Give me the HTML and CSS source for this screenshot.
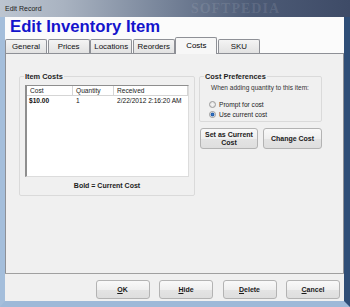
FILE: index.html
```html
<!DOCTYPE html>
<html>
<head>
<meta charset="utf-8">
<title>Edit Record</title>
<link rel="stylesheet" href="styles.css">
</head>
<body>
<div class="window">
  <div class="titlebar">
    <span class="caption">Edit Record</span>
    <span class="watermark">SOFTPEDIA</span>
  </div>
  <div class="frame">
    <div class="client">
      <div class="header">
        <h1 class="app-title">Edit Inventory Item</h1>
        <div class="tabs">
          <div class="tab">General</div>
          <div class="tab">Prices</div>
          <div class="tab">Locations</div>
          <div class="tab">Reorders</div>
          <div class="tab active">Costs</div>
          <div class="tab">SKU</div>
        </div>
      </div>
      <div class="panel">
        <fieldset class="group costs-group">
          <legend>Item Costs</legend>
          <div class="listview">
            <div class="lv-row lv-head">
              <span class="cell">Cost</span>
              <span class="cell">Quantity</span>
              <span class="cell">Received</span>
            </div>
            <div class="lv-row">
              <span class="cell bold">$10.00</span>
              <span class="cell">1</span>
              <span class="cell">2/22/2012 2:16:20 AM</span>
            </div>
          </div>
          <div class="note">Bold = Current Cost</div>
        </fieldset>
        <div class="right-col">
          <fieldset class="group pref-group">
            <legend>Cost Preferences</legend>
            <div class="hint">When adding quantity to this item:</div>
            <label class="radio first"><span class="dot"></span>Prompt for cost</label>
            <label class="radio"><span class="dot on"></span>Use current cost</label>
          </fieldset>
          <div class="btn-row">
            <button class="btn set-btn">Set as Current<br>Cost</button>
            <button class="btn change-btn">Change Cost</button>
          </div>
        </div>
      </div>
      <div class="footer">
        <button class="btn foot-btn"><u>O</u>K</button>
        <button class="btn foot-btn"><u>H</u>ide</button>
        <button class="btn foot-btn"><u>D</u>elete</button>
        <button class="btn foot-btn"><u>C</u>ancel</button>
      </div>
    </div>
  </div>
</div>
</body>
</html>
```
FILE: styles.css
```css
html, body {
  margin: 0;
  padding: 0;
}
body {
  width: 350px;
  height: 307px;
  overflow: hidden;
  font-family: "Liberation Sans", Arial, sans-serif;
  background: #3c4965;
}
.window {
  display: flex;
  flex-direction: column;
  height: 307px;
}
.titlebar {
  height: 17px;
  flex: none;
  display: flex;
  align-items: center;
  justify-content: space-between;
  padding-left: 5px;
  background: linear-gradient(to right, #bcc5d0 0%, #a9b3c1 18%, #7a879c 45%, #4d5b76 72%, #3e4b67 100%);
  overflow: hidden;
}
.caption {
  font-size: 7px;
  color: #1c1c1c;
}
.watermark {
  font-family: "Liberation Serif", serif;
  font-size: 14px;
  font-weight: bold;
  letter-spacing: 1px;
  color: rgba(255, 255, 255, 0.1);
  margin-right: 70px;
}
.frame {
  flex: 1;
  display: flex;
  border-left: 5px solid #a4bedb;
  border-right: 6px solid #2f4e77;
  border-bottom: 6px solid #9db9d8;
}
.client {
  flex: 1;
  display: flex;
  flex-direction: column;
  background: #f0f0f0;
}
.header {
  height: 36px;
  flex: none;
  background: #fbfbfb;
}
.app-title {
  margin: 0;
  height: 20px;
  line-height: 20px;
  padding-left: 5px;
  font-size: 16.7px;
  font-weight: bold;
  color: #1414cc;
}
.tabs {
  height: 16px;
  display: flex;
  align-items: flex-end;
  gap: 0.6px;
}
.tab {
  width: 42px;
  height: 14px;
  box-sizing: border-box;
  border: 1px solid #8e9096;
  border-bottom: none;
  border-radius: 2px 2px 0 0;
  background: linear-gradient(#f4f4f4, #e2e2e2);
  font-size: 7.9px;
  line-height: 13px;
  text-align: center;
  color: #111;
}
.tab.active {
  height: 17px;
  margin-bottom: -1px;
  line-height: 15px;
  background: #f7f7f7;
  position: relative;
  z-index: 1;
  color: #000;
}
.panel {
  height: 220px;
  flex: none;
  box-sizing: border-box;
  border: 1px solid #8e9096;
  border-bottom: none;
  padding: 18px 0 0 13px;
  display: flex;
  align-items: flex-start;
  gap: 4px;
}
.group {
  margin: 0;
  padding: 4px 5px 4px 5px;
  border: 1px solid #dadada;
  border-radius: 2px;
  min-width: 0;
  box-sizing: border-box;
}
.group legend {
  padding: 0 1px;
  margin-left: -1px;
  font-size: 7.4px;
  font-weight: bold;
  line-height: 9px;
  color: #1e1e1e;
}
.costs-group {
  width: 176px;
}
.listview {
  height: 92px;
  box-sizing: border-box;
  background: #fff;
  border-style: solid;
  border-width: 1px 1px 1px 2px;
  border-color: #8e8e8e #dcdcdc #dcdcdc #8e8e8e;
  font-size: 6.6px;
  color: #111;
  overflow: hidden;
}
.lv-row {
  display: grid;
  grid-template-columns: 46px 41px 1fr;
  height: 8px;
  line-height: 8px;
  white-space: nowrap;
}
.lv-head {
  height: 10px;
  line-height: 10px;
  box-sizing: border-box;
  border-bottom: 1px solid #d5d5d5;
  margin-bottom: 1px;
}
.lv-head .cell {
  border-right: 1px solid #d5d5d5;
  color: #222;
}
.cell {
  padding-left: 3px;
}
.cell.bold {
  font-weight: bold;
  padding-left: 2px;
}
.note {
  margin-top: 4px;
  text-align: center;
  font-size: 7px;
  font-weight: bold;
  line-height: 10px;
  color: #222;
}
.right-col {
  display: flex;
  flex-direction: column;
}
.pref-group {
  width: 123px;
  padding: 3px 5px 2px 5px;
}
.hint {
  margin-left: 6px;
  font-size: 6.5px;
  line-height: 8px;
  color: #333;
  white-space: nowrap;
}
.radio {
  display: flex;
  align-items: center;
  gap: 3px;
  height: 10px;
  margin-left: 4px;
  font-size: 6.6px;
  color: #222;
}
.radio.first {
  margin-top: 7px;
}
.dot {
  width: 7px;
  height: 7px;
  box-sizing: border-box;
  border-radius: 50%;
  border: 1px solid #9a9a9a;
  background: radial-gradient(circle, #f6f6f6 0, #dcdcdc 100%);
}
.dot.on {
  background: radial-gradient(circle, #3a78c8 0, #1f5aa8 1.6px, #dfe6ee 2.2px);
}
.btn-row {
  display: flex;
  gap: 5px;
  margin-top: 6px;
  margin-left: 1px;
}
.btn {
  font-family: inherit;
  font-size: 7px;
  font-weight: bold;
  line-height: 8px;
  color: #1a1a1a;
  padding: 0;
  border: 1px solid #b3b3b3;
  border-radius: 3px;
  background: linear-gradient(#f9f9f9, #efefef 50%, #e4e4e4 51%, #dedede);
  box-sizing: border-box;
}
.set-btn {
  width: 58px;
  height: 21px;
}
.change-btn {
  width: 59px;
  height: 21px;
}
.footer {
  height: 28px;
  flex: none;
  box-sizing: border-box;
  border-top: 1px solid #a0a0a0;
  display: flex;
  justify-content: flex-end;
  align-items: flex-start;
  gap: 9.5px;
  padding: 6px 4px 0 0;
}
.foot-btn {
  width: 54px;
  height: 19px;
}
```
